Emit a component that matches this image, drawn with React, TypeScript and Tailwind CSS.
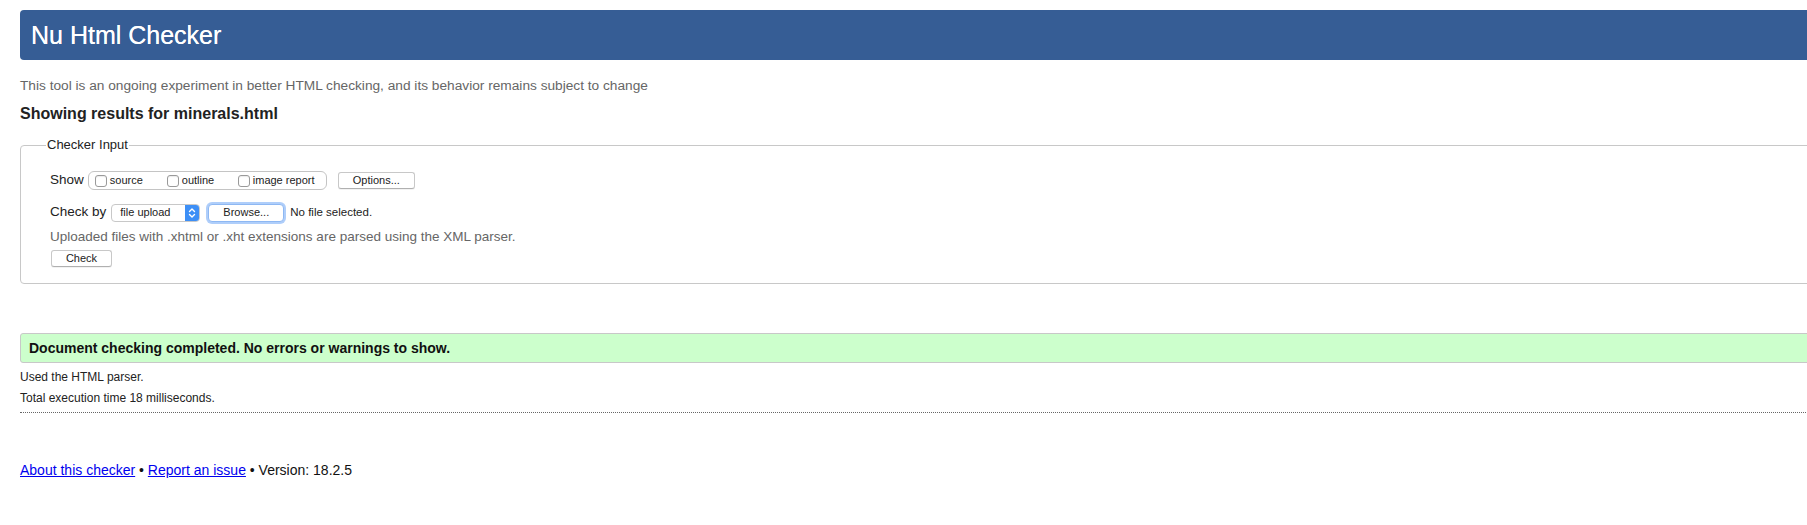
import React from "react";

const Box = ({ label }: { label: string }) => (
  <span className="flex items-center gap-[3px]">
    <span className="inline-block w-[12px] h-[12px] rounded-[3px] border border-[#9a9a9a] bg-white shadow-[inset_0_1px_1px_rgba(0,0,0,0.08)]" />
    <span>{label}</span>
  </span>
);

export default function App() {
  return (
    <div className="w-[1807px] h-[525px] overflow-hidden bg-white" style={{ fontFamily: '"Liberation Sans", Arial, Helvetica, sans-serif' }}>
      <div className="w-[1860px] pl-[20px] pt-[10px]">
        <div className="h-[50px] rounded-[4px] bg-[#365d95] flex items-center pl-[11px]">
          <h1 className="text-[25px] leading-none text-white [text-shadow:0_0_0.4px_white]">Nu Html Checker</h1>
        </div>

        <p className="mt-[18px] text-[13.7px] leading-[16px] text-[#666]">
          This tool is an ongoing experiment in better HTML checking, and its behavior remains subject to change
        </p>
        <h2 className="mt-[10px] text-[16px] leading-[20px] font-bold text-[#222]">Showing results for minerals.html</h2>

        <fieldset className="mt-[13px] border border-[#c8c8c8] rounded-[4px] pl-[29px] pt-[18px] pb-[14px]">
          <legend className="ml-[-4px] px-[1px] text-[13px] leading-[16px] text-[#222]">Checker Input</legend>

          <div className="flex items-center h-[19px] text-[13.5px] text-[#222]">
            <span className="mr-[4px]">Show</span>
            <span className="flex items-center h-[19px] w-[239px] rounded-[6px] border border-[#c4c4c4] pl-[6px] text-[11px] text-[#222]">
              <span className="w-[72px]"><Box label="source" /></span>
              <span className="w-[71px]"><Box label="outline" /></span>
              <Box label="image report" />
            </span>
            <button className="ml-[11px] h-[17px] w-[77px] rounded-[3px] border border-[#c8c8c8] border-b-[#b0b0b0] bg-white text-[11px] leading-none text-[#222] shadow-[0_1px_0_rgba(0,0,0,0.05)]">
              Options...
            </button>
          </div>

          <div className="flex items-center h-[17px] mt-[14px] text-[13.5px] text-[#222]">
            <span className="mr-[5px]">Check by</span>
            <span className="flex h-[18px] w-[89px] rounded-[4px] border border-[#c8c8c8] bg-white text-[11px] overflow-hidden">
              <span className="flex-1 flex items-center pl-[8px] text-[#222]">file upload</span>
              <span className="w-[14px] flex items-center justify-center bg-[#3d8ff6]">
                <svg width="8" height="12" viewBox="0 0 8 12" fill="none" stroke="white" strokeWidth="1.4" strokeLinecap="round" strokeLinejoin="round">
                  <path d="M1.5 4.5 L4 2 L6.5 4.5" />
                  <path d="M1.5 7.5 L4 10 L6.5 7.5" />
                </svg>
              </span>
            </span>
            <button className="ml-[8px] h-[18px] w-[76px] rounded-[4px] border border-[#8eb8f3] bg-white text-[11px] leading-none text-[#222] shadow-[0_0_0_2px_rgba(110,165,245,0.55)]">
              Browse...
            </button>
            <span className="ml-[6px] text-[11.5px] text-[#222]">No file selected.</span>
          </div>

          <p className="mt-[8px] text-[13.5px] leading-[16px] text-[#666]">
            Uploaded files with .xhtml or .xht extensions are parsed using the XML parser.
          </p>
          <button className="mt-[5px] ml-[1px] h-[17px] w-[61px] rounded-[3px] border border-[#c8c8c8] border-b-[#b0b0b0] bg-white text-[11px] leading-none text-[#222] shadow-[0_1px_0_rgba(0,0,0,0.05)]">
            Check
          </button>
        </fieldset>

        <div className="mt-[49px] h-[30px] flex items-center rounded-[3px] border border-[#c8c8c8] bg-[#ccffcc] pl-[8px]">
          <span className="text-[14px] font-bold text-[#111]">Document checking completed. No errors or warnings to show.</span>
        </div>

        <p className="mt-[7px] text-[12px] leading-[15px] text-[#222]">Used the HTML parser.</p>
        <p className="mt-[6px] text-[12px] leading-[15px] text-[#222]">Total execution time 18 milliseconds.</p>
        <div className="mt-[6px] border-t border-dotted border-[#666]" />

        <p className="mt-[49px] text-[14px] leading-[17px] text-[#111]">
          <a href="#" className="text-[#0000ee] underline">About this checker</a>
          {" • "}
          <a href="#" className="text-[#0000ee] underline">Report an issue</a>
          {" • Version: 18.2.5"}
        </p>
      </div>
    </div>
  );
}
